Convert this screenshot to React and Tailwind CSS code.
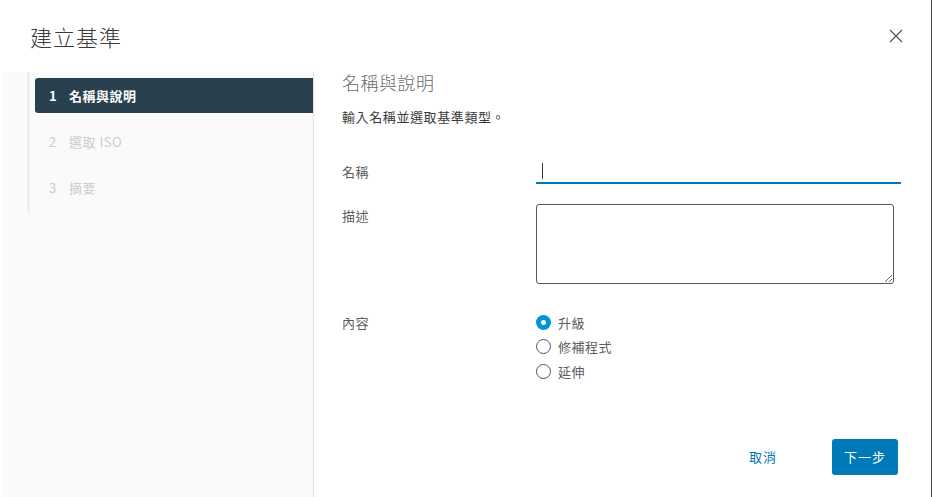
import React, { useState } from 'react';

const font = { fontFamily: '"Noto Sans CJK TC", "Noto Sans", sans-serif' };

const steps = [
    { n: 1, label: '名稱與說明' },
    { n: 2, label: '選取 ISO' },
    { n: 3, label: '摘要' },
];

const options = ['升級', '修補程式', '延伸'];

const Radio = ({ checked, label, onClick }) => (
    <button type="button" onClick={onClick} className="flex items-center h-[24.5px] gap-[7px] text-left">
        {checked ? (
            <span className="w-[15px] h-[15px] rounded-full bg-[#0095d3] flex items-center justify-center">
                <span className="w-[5px] h-[5px] rounded-full bg-white" />
            </span>
        ) : (
            <span className="w-[15px] h-[15px] rounded-full border border-[#565656] bg-white" />
        )}
        <span className="text-[13px] text-[#5c5c5c] tracking-[0.5px]">{label}</span>
    </button>
);

export default function App() {
    const [type, setType] = useState(0);

    return (
        <div style={font} className="w-[932px] h-[497px] bg-white flex flex-col border-r border-[#444] overflow-hidden">
            <header className="h-[72px] shrink-0 flex items-center justify-between pl-[30px] pr-[27px]">
                <h1 className="text-[22px] font-light text-[#3a3a3a] tracking-[1px] leading-none -mt-[1px]">建立基準</h1>
                <button className="w-[16px] h-[16px] flex items-center justify-center">
                    <svg width="16" height="16" viewBox="0 0 16 16" fill="none" stroke="#565656" strokeWidth="1.3">
                        <path d="M2 2 L14 14 M14 2 L2 14" />
                    </svg>
                </button>
            </header>

            <div className="flex flex-1 min-h-0">
                <aside className="w-[312px] ml-[2px] shrink-0 bg-[#fafafa] border-r border-[#e0e0e0] pl-[25px]">
                    <div className="border-l-[3px] border-[#eeeeee] pt-[6px] pb-[8px] pl-[5px] flex flex-col gap-[11px]">
                        {steps.map((s) =>
                            s.n === 1 ? (
                                <div key={s.n} className="h-[35px] rounded-l-[3px] bg-[#29414e] flex items-center pl-[14px] text-[13px] font-bold text-white">
                                    <span className="w-[20px]">{s.n}</span>
                                    <span className="tracking-[0.5px]">{s.label}</span>
                                </div>
                            ) : (
                                <div key={s.n} className="h-[35px] flex items-center pl-[14px] text-[13px] text-[#cccccc]">
                                    <span className="w-[20px]">{s.n}</span>
                                    <span className="tracking-[0.5px]">{s.label}</span>
                                </div>
                            )
                        )}
                    </div>
                </aside>

                <main className="flex-1 flex flex-col justify-between pl-[28px] pr-[30px]">
                    <div>
                        <h2 className="text-[18px] font-light text-[#6a6a6a] leading-[20px] tracking-[0.5px]">名稱與說明</h2>
                        <p className="mt-[16px] text-[13px] leading-[18px] text-[#3a3a3a] tracking-[0.6px]">輸入名稱並選取基準類型。</p>

                        <div className="mt-[34px] flex items-center">
                            <label className="w-[194px] text-[13px] text-[#5c5c5c] tracking-[0.6px]">名稱</label>
                            <div className="w-[365px] h-[24px] border-b-2 border-[#0079b8] relative">
                                <span className="absolute left-[6px] top-[3px] w-px h-[16px] bg-[#333]" />
                            </div>
                        </div>

                        <div className="mt-[20px] flex items-start">
                            <label className="w-[194px] text-[13px] leading-[24px] text-[#5c5c5c] tracking-[0.6px]">描述</label>
                            <textarea className="w-[358px] h-[80px] border border-[#565656] rounded-[3px] resize-y outline-none" />
                        </div>

                        <div className="mt-[26px] flex items-start">
                            <label className="w-[194px] text-[13px] leading-[26px] text-[#5c5c5c] tracking-[0.6px]">內容</label>
                            <div className="flex flex-col">
                                {options.map((o, i) => (
                                    <Radio key={o} label={o} checked={type === i} onClick={() => setType(i)} />
                                ))}
                            </div>
                        </div>
                    </div>

                    <footer className="flex items-center justify-end gap-[43px] pb-[22px] pr-[3px]">
                        <button className="text-[13px] text-[#0079b8] tracking-[1px] px-[12px]">取消</button>
                        <button className="w-[66px] h-[36px] rounded-[3px] bg-[#0079b8] text-white text-[13px] tracking-[1px]">下一步</button>
                    </footer>
                </main>
            </div>
        </div>
    );
}
